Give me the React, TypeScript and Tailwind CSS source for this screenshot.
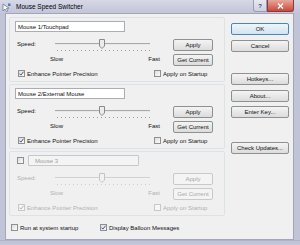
import React from "react";

const F = "font-['Liberation_Sans',Arial,sans-serif]";

function Btn({ label, wide, disabled, def }: { label: string; wide?: boolean; disabled?: boolean; def?: boolean }) {
  const size = wide ? "w-[58px]" : "w-[40px]";
  const look = disabled
    ? "border-[#c9c9c9] bg-[#f4f4f4] text-[#a8a8a8]"
    : def
    ? "border-[#4a86bd] bg-linear-to-b from-[#eef6fc] to-[#d3e3f0] text-[#111111]"
    : "border-[#8f9090] bg-linear-to-b from-[#f4f4f4] to-[#dcdcdc] text-[#111111]";
  return (
    <div className={`h-[12px] ${size} shrink-0 flex items-center justify-center rounded-[2px] border text-[6px] leading-none ${look}`}>
      {label}
    </div>
  );
}

function Check({ checked, disabled }: { checked?: boolean; disabled?: boolean }) {
  return (
    <div
      className={`w-[7px] h-[7px] shrink-0 border flex items-center justify-center ${
        disabled ? "border-[#c8c8c8] bg-[#f6f6f6]" : "border-[#8e8f8f] bg-linear-to-br from-[#dedede] to-[#fbfbfb]"
      }`}
    >
      {checked && (
        <svg width="5" height="5" viewBox="0 0 5 5">
          <path d="M0.4 2.6 L1.9 4.1 L4.6 0.7" stroke={disabled ? "#b4b4b4" : "#3f5488"} strokeWidth="1" fill="none" />
        </svg>
      )}
    </div>
  );
}

function Slider({ disabled }: { disabled?: boolean }) {
  const ticks = Array.from({ length: 24 });
  return (
    <div className="w-[118px] flex flex-col">
      <div className="relative h-[10px]">
        <div className={`ml-[5px] mt-[4px] w-[95px] h-[2px] border-t ${disabled ? "border-[#d0d0d0] bg-[#f4f4f4]" : "border-[#a9a9a9] bg-[#e8e8e8]"}`} />
        <svg className="absolute left-[49px] top-0" width="6" height="10" viewBox="0 0 6 10">
          <path
            d="M0.5 0.5 H5.5 V7 L3 9.5 L0.5 7 Z"
            fill={disabled ? "#f2f2f2" : "#ececec"}
            stroke={disabled ? "#c4c4c4" : "#8a8a8a"}
            strokeWidth="1"
          />
        </svg>
      </div>
      <div className="mt-[1px] ml-[7px] flex gap-[3px] h-[1px]">
        {ticks.map((_, i) => (
          <div key={i} className={`w-[1px] h-[1px] ${disabled ? "bg-[#d0d0d0]" : "bg-[#9a9a9a]"}`} />
        ))}
      </div>
      <div className={`mt-[4px] w-[110px] flex justify-between text-[6px] leading-[8px] ${disabled ? "text-[#b0b0b0]" : "text-[#111111]"}`}>
        <span>Slow</span>
        <span>Fast</span>
      </div>
    </div>
  );
}

function Group({ name, third }: { name: string; third?: boolean }) {
  const d = !!third;
  const txt = d ? "text-[#b0b0b0]" : "text-[#111111]";
  return (
    <div className="w-[216px] h-[65px] border border-[#dde2e7] rounded-[2px] flex flex-col">
      {third ? (
        <div className="mt-[3px] flex items-center h-[11px]">
          <div className="ml-[7px]">
            <Check />
          </div>
          <div className="ml-[4px] w-[111px] h-[11px] border border-[#c6c8cc] bg-[#f4f4f4] rounded-[1px] flex items-center pl-[6px] text-[6px] leading-none text-[#a0a0a0]">
            {name}
          </div>
        </div>
      ) : (
        <div className="mt-[3px] ml-[5px] w-[110px] h-[11px] border border-[#abadb3] bg-white flex items-center pl-[2px] text-[6px] leading-none text-[#111111]">
          {name}
        </div>
      )}
      <div className="mt-[7px] flex h-[27px]">
        <div className={`ml-[7px] w-[33px] mt-[1px] text-[6px] leading-[8px] ${txt}`}>Speed:</div>
        <Slider disabled={d} />
        <div className="ml-[5px] flex flex-col gap-[3px]">
          <Btn label="Apply" disabled={d} />
          <Btn label="Get Current" disabled={d} />
        </div>
      </div>
      <div className="mt-[4px] flex items-center h-[7px]">
        <div className="ml-[8px] w-[136px] flex items-center gap-[2px]">
          <Check checked disabled={d} />
          <span className={`text-[6px] leading-none ${txt}`}>Enhance Pointer Precision</span>
        </div>
        <div className="flex items-center gap-[2px]">
          <Check disabled={d} />
          <span className={`text-[6px] leading-none ${txt}`}>Apply on Startup</span>
        </div>
      </div>
    </div>
  );
}

export default function App() {
  return (
    <div className={`w-[300px] h-[245px] bg-[#c1c3d6] flex flex-col overflow-hidden ${F}`}>
      {/* title bar */}
      <div className="h-[13px] flex items-start bg-linear-to-b from-[#d6d8e6] to-[#c3c5d8]">
        <svg className="ml-[2px] mt-[3px]" width="9" height="9" viewBox="0 0 9 9">
          <path d="M1 1 L1 8 L3 6 L4.5 8.5 L5.8 7.8 L4.4 5.4 L7 5.2 Z" fill="#ffffff" stroke="#5a6a8a" strokeWidth="0.7" />
          <rect x="6" y="0.5" width="2.5" height="2.5" fill="#4b7fc4" />
        </svg>
        <div className="ml-[5px] mt-[3px] text-[6.5px] leading-[8px] text-black">Mouse Speed Switcher</div>
        <div className="flex-1" />
        <div className="w-[14px] h-[12px] border border-t-0 border-[#9a9eb4] rounded-bl-[3px] bg-linear-to-b from-[#e8eaf2] to-[#cdd0de] flex items-center justify-center text-[6px] leading-none text-[#3c4660] font-bold">
          ?
        </div>
        <div className="mr-[6px] w-[27px] h-[12px] border border-t-0 border-[#8a3a3a] rounded-br-[3px] bg-linear-to-b from-[#e7a69a] to-[#c9463a] flex items-center justify-center">
          <svg width="7" height="6" viewBox="0 0 7 6">
            <path d="M1 0.5 L6 5.5 M6 0.5 L1 5.5" stroke="#ffffff" strokeWidth="1.4" />
          </svg>
        </div>
      </div>
      {/* client */}
      <div className="ml-[5px] mr-[6px] h-[227px] bg-[#f0f0f0] border border-[#a2a5bb] flex">
        <div className="pl-[3px] pt-[3px] flex flex-col">
          <Group name="Mouse 1/Touchpad" />
          <div className="mt-[2px]">
            <Group name="Mouse 2/External Mouse" />
          </div>
          <div className="mt-[2px]">
            <Group name="Mouse 3" third />
          </div>
          <div className="mt-[8px] flex items-center h-[7px]">
            <div className="ml-[2px] w-[89px] flex items-center gap-[2px]">
              <Check />
              <span className="text-[6px] leading-none text-[#111111]">Run at system startup</span>
            </div>
            <div className="flex items-center gap-[2px]">
              <Check checked />
              <span className="text-[6px] leading-none text-[#111111]">Display Balloon Messages</span>
            </div>
          </div>
        </div>
        <div className="ml-[6px] pt-[9px] flex flex-col">
          <Btn label="OK" wide def />
          <div className="mt-[5px]"><Btn label="Cancel" wide /></div>
          <div className="mt-[21px]"><Btn label="Hotkeys..." wide /></div>
          <div className="mt-[5px]"><Btn label="About..." wide /></div>
          <div className="mt-[4px]"><Btn label="Enter Key..." wide /></div>
          <div className="mt-[24px]"><Btn label="Check Updates..." wide /></div>
        </div>
      </div>
      <div className="flex-1 border-t border-[#b0b2c6]" />
    </div>
  );
}
